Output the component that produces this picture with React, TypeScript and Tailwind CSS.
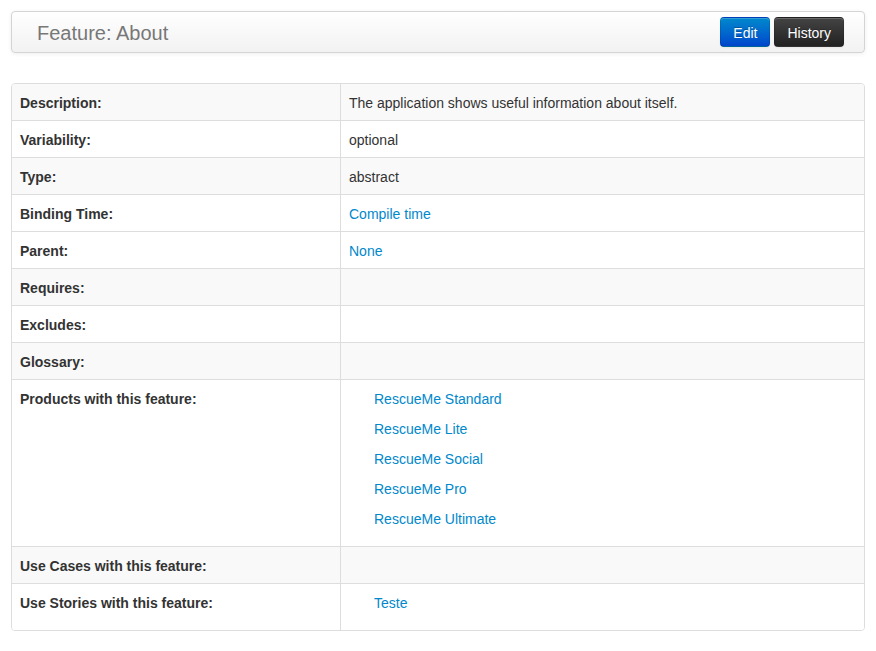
import React from "react";

const rows: { label: string; value?: React.ReactNode; list?: string[]; gray: boolean }[] = [
  { label: "Description:", value: "The application shows useful information about itself.", gray: true },
  { label: "Variability:", value: "optional", gray: false },
  { label: "Type:", value: "abstract", gray: true },
  { label: "Binding Time:", value: <a className="text-[#0088cc]" href="#">Compile time</a>, gray: false },
  { label: "Parent:", value: <a className="text-[#0088cc]" href="#">None</a>, gray: false },
  { label: "Requires:", gray: true },
  { label: "Excludes:", gray: false },
  { label: "Glossary:", gray: true },
  {
    label: "Products with this feature:",
    list: ["RescueMe Standard", "RescueMe Lite", "RescueMe Social", "RescueMe Pro", "RescueMe Ultimate"],
    gray: false,
  },
  { label: "Use Cases with this feature:", gray: true },
  { label: "Use Stories with this feature:", list: ["Teste"], gray: false },
];

export default function App() {
  return (
    <div
      className="min-h-[651px] bg-white px-[11px] pt-[11px] text-[14px] leading-[20px] text-[#333]"
      style={{ fontFamily: '"Liberation Sans", Arial, Helvetica, sans-serif' }}
    >
      <div className="flex h-[42px] items-center justify-between rounded-[4px] border border-[#d4d4d4] bg-gradient-to-b from-white to-[#f2f2f2] pl-[25px] pr-[20px] shadow-[0_1px_4px_rgba(0,0,0,0.065)]">
        <span className="pt-[2px] text-[20px] leading-[20px] text-[#777]">Feature: About</span>
        <div className="flex gap-[4px]">
          <button className="h-[30px] rounded-[4px] border border-[rgba(0,0,0,0.1)] border-b-[rgba(0,0,0,0.25)] bg-gradient-to-b from-[#0088cc] to-[#0044cc] px-[12px] pt-[2px] text-[14px] leading-[20px] text-white [text-shadow:0_-1px_0_rgba(0,0,0,0.25)] shadow-[inset_0_1px_0_rgba(255,255,255,0.2),0_1px_2px_rgba(0,0,0,0.05)]">
            Edit
          </button>
          <button className="h-[30px] rounded-[4px] border border-[rgba(0,0,0,0.1)] border-b-[rgba(0,0,0,0.25)] bg-gradient-to-b from-[#444444] to-[#222222] px-[12px] pt-[2px] text-[14px] leading-[20px] text-white [text-shadow:0_-1px_0_rgba(0,0,0,0.25)] shadow-[inset_0_1px_0_rgba(255,255,255,0.2),0_1px_2px_rgba(0,0,0,0.05)]">
            History
          </button>
        </div>
      </div>

      <div className="mt-[30px] overflow-hidden rounded-[4px] border border-[#dddddd]">
        {rows.map((r, i) => (
          <div
            key={r.label}
            className={`grid grid-cols-[329px_1fr] ${i > 0 ? "border-t border-[#dddddd]" : ""} ${r.gray ? "bg-[#f9f9f9]" : "bg-white"}`}
          >
            <div className="border-r border-[#dddddd] px-[8px] pt-[9px] pb-[7px] font-bold">{r.label}</div>
            <div className="px-[8px] pt-[9px] pb-[7px]">
              {r.list ? (
                <ul className="mb-[10px] ml-[25px] flex flex-col gap-[10px]">
                  {r.list.map((x) => (
                    <li key={x}>
                      <a className="text-[#0088cc]" href="#">{x}</a>
                    </li>
                  ))}
                </ul>
              ) : (
                <span className="block min-h-[20px]">{r.value}</span>
              )}
            </div>
          </div>
        ))}
      </div>
    </div>
  );
}
